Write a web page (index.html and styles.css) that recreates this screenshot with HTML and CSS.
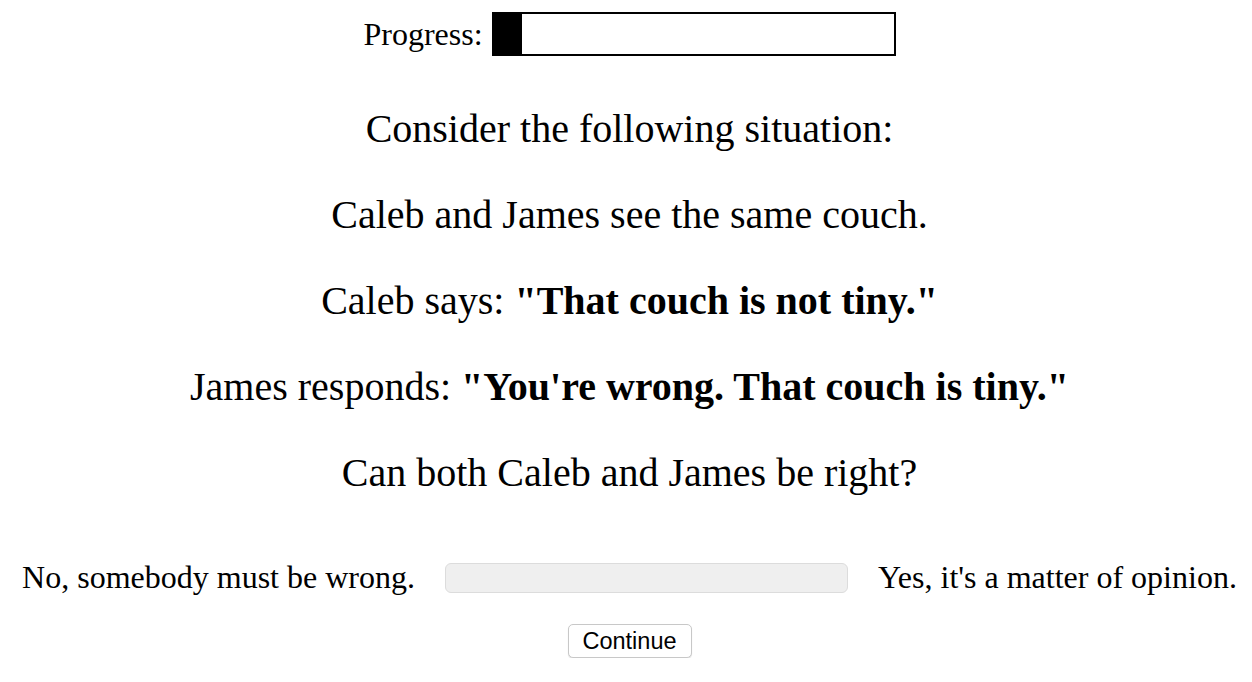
FILE: index.html
```html
<!DOCTYPE html>
<html lang="en">
<head>
<meta charset="utf-8">
<title>Survey</title>
<link rel="stylesheet" href="styles.css">
</head>
<body>
<div class="progress-row">
  <span class="progress-label">Progress:</span>
  <div class="progress-bar"><div class="progress-fill" style="width: 7%"></div></div>
</div>
<p class="line first">Consider the following situation:</p>
<p class="line">Caleb and James see the same couch.</p>
<p class="line">Caleb says: <strong>"That couch is not tiny."</strong></p>
<p class="line">James responds: <strong>"You're wrong. That couch is tiny."</strong></p>
<p class="line">Can both Caleb and James be right?</p>
<div class="scale-row">
  <span class="scale-label">No, somebody must be wrong.</span>
  <div class="slider"></div>
  <span class="scale-label">Yes, it's a matter of opinion.</span>
</div>
<div class="button-row">
  <button class="continue" type="button">Continue</button>
</div>
</body>
</html>
```

FILE: styles.css
```css
html, body {
  background: #fff;
}
body {
  margin: 8px;
  padding-left: 7px;
  font-family: "Liberation Serif", "Times New Roman", serif;
  color: #000;
}
.progress-row {
  display: flex;
  justify-content: center;
  align-items: center;
  gap: 9px;
  margin-top: 4px;
}
.progress-label {
  font-size: 32px;
  line-height: 37px;
}
.progress-bar {
  width: 400px;
  height: 40px;
  border: 2px solid #000;
  background: #fff;
  display: flex;
}
.progress-fill {
  height: 100%;
  background: #000;
}
.line {
  font-size: 40px;
  line-height: 46px;
  text-align: center;
  margin: 40px 0;
}
.line.first {
  margin-top: 50px;
}
.scale-row {
  display: flex;
  justify-content: center;
  align-items: center;
  gap: 30px;
  margin-top: 63px;
  margin-left: -7px;
  padding-left: 7px;
}
.scale-label {
  font-size: 32px;
  line-height: 37px;
  white-space: nowrap;
}
.slider {
  width: 401px;
  height: 28px;
  background: #efefef;
  border: 1px solid #dcdcdc;
  border-radius: 6px;
  flex: none;
}
.button-row {
  display: flex;
  justify-content: center;
  margin-top: 28px;
}
.continue {
  width: 124px;
  height: 34px;
  font-family: "Liberation Sans", Arial, sans-serif;
  font-size: 23.5px;
  color: #000;
  background: #fff;
  border: 1px solid #c8c8c8;
  border-radius: 5px;
  box-shadow: 0 1px 1px rgba(0, 0, 0, 0.12);
  padding: 0;
}
```
